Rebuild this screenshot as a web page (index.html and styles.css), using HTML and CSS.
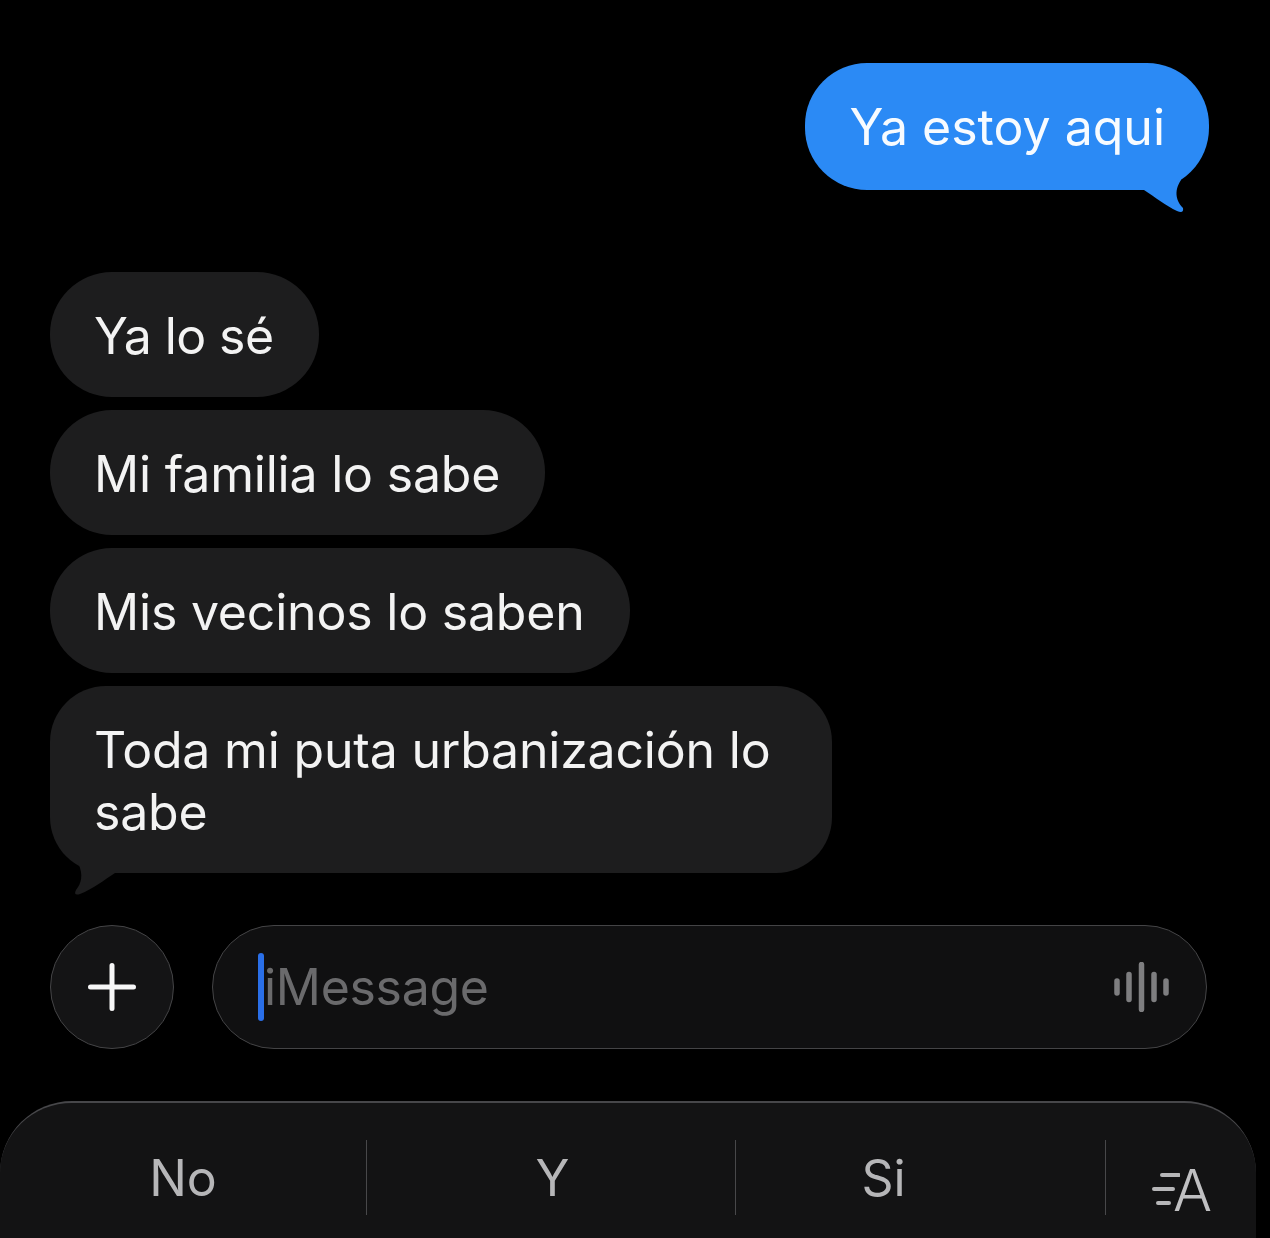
FILE: index.html
```html
<!DOCTYPE html>
<html lang="es">
<head>
<meta charset="utf-8">
<title>iMessage</title>
<link rel="stylesheet" href="styles.css">
</head>
<body>
<main class="thread">
  <div class="bubble sent">Ya estoy aqui
    <svg class="tail tail-sent" viewBox="0 0 60 45"><path d="M10 18 L13 20 C24 27 35 36 46 41 Q53 44 52 38 C46 32 42 22 50 10 L50 0 L10 0 Z"/></svg>
  </div>
  <div class="group">
    <div class="bubble received short">Ya lo sé</div>
    <div class="bubble received">Mi familia lo sabe</div>
    <div class="bubble received">Mis vecinos lo saben</div>
    <div class="bubble received last">Toda mi puta urbanización lo sabe
      <svg class="tail tail-received" viewBox="0 0 60 45"><path d="M50 18 L47 20 C36 27 25 36 12 41 Q5 43 8 37 C13 31 16 22 10 10 L10 0 L50 0 Z"/></svg>
    </div>
  </div>
  <div class="composer">
    <div class="plus">
      <svg viewBox="0 0 48 48" class="plus-icon"><path d="M2.5 24H45.5M24 2.5V45.5"/></svg>
    </div>
    <div class="field">
      <span class="caret"></span>
      <span class="placeholder">iMessage</span>
      <svg class="wave" viewBox="0 0 56 50"><path d="M4 19V31M16 12.500V37.500M28.500 2.500V47.500M41 12.500V37.500M53 19V31"/></svg>
    </div>
  </div>
</main>
<section class="keyboard">
  <div class="suggestion first">No</div>
  <div class="suggestion second">Y</div>
  <div class="suggestion third">Si</div>
  <div class="format">
    <svg class="speed" viewBox="0 0 28 36"><path d="M10 2H27M2 16H21M6 30H17"/></svg>
    <span class="format-a">A</span>
  </div>
</section>
</body>
</html>
```
FILE: styles.css
```css
* { box-sizing: border-box; }
html, body { margin: 0; height: 1238px; overflow: hidden; background: #000; }
body {
  font-family: Inter, "Liberation Sans", sans-serif;
  color: #f3f3f3;
  display: flex;
  flex-direction: column;
}
.thread { padding: 63px 63px 52px 50px; display: flex; flex-direction: column; }
.bubble {
  position: relative;
  font-size: 50px;
  line-height: 62px;
  letter-spacing: -0.2px;
  padding: 33px 45px 30px 44px;
  border-radius: 62px;
  width: fit-content;
}
.sent {
  align-self: flex-end;
  background: #2b8af5;
  margin-right: -2px;
  padding: 33px 44px 32px 45px;
  letter-spacing: 0;
  color: #f7fbff;
}
.group { margin-top: 82px; display: flex; flex-direction: column; gap: 13px; }
.received { background: #1d1d1e; }
.short { letter-spacing: -0.6px; padding-right: 46px; }
.last { width: 782px; border-radius: 56px; }
.tail { position: absolute; width: 60px; height: 45px; }
.tail-sent { right: 18px; bottom: -25px; fill: #2b8af5; }
.tail-received { left: 18px; bottom: -25px; fill: #1d1d1e; }
.composer { margin-top: 52px; display: flex; gap: 38px; }
.plus {
  width: 124px; height: 124px; border-radius: 50%;
  background: #141415; border: 1.5px solid #444446;
  display: flex; align-items: center; justify-content: center;
}
.plus-icon { width: 48px; height: 48px; fill: none; stroke: #f7f7f7; stroke-width: 5; stroke-linecap: round; }
.field {
  width: 995px; height: 124px; border-radius: 62px;
  background: #101011; border: 1.5px solid #444446;
  display: flex; align-items: center; padding: 0 37px 0 45px;
}
.caret { width: 6px; height: 68px; border-radius: 3px; background: #2a6fe8; }
.placeholder { font-size: 50px; letter-spacing: -0.3px; color: #6a6a6c; flex: 1; }
.wave { width: 56px; height: 50px; fill: none; stroke: #7e7e80; stroke-width: 5.5; stroke-linecap: round; }
.keyboard {
  flex: 1; width: 1256px;
  background: #131314;
  border-top: 2px solid #47474a;
  border-radius: 72px 72px 0 0;
  display: flex;
  padding-top: 37px;
  align-items: flex-start;
}
.suggestion {
  height: 75px;
  font-size: 50px;
  line-height: 77px;
  color: #b6b6b8;
  text-align: center;
  border-right: 1.5px solid #48484a;
}
.first { width: 367px; }
.second { width: 369px; padding-left: 3px; }
.third { width: 370px; padding-right: 74px; }
.format { flex: 1; display: flex; align-items: center; height: 75px; padding-left: 46px; }
.speed { width: 28px; height: 36px; fill: none; stroke: #b6b6b8; stroke-width: 4; stroke-linecap: round; margin-top: 27px; }
.format-a { font-size: 58px; font-weight: 300; color: #c0c0c2; margin-left: -7px; margin-top: 24px; line-height: 60px; }
```
